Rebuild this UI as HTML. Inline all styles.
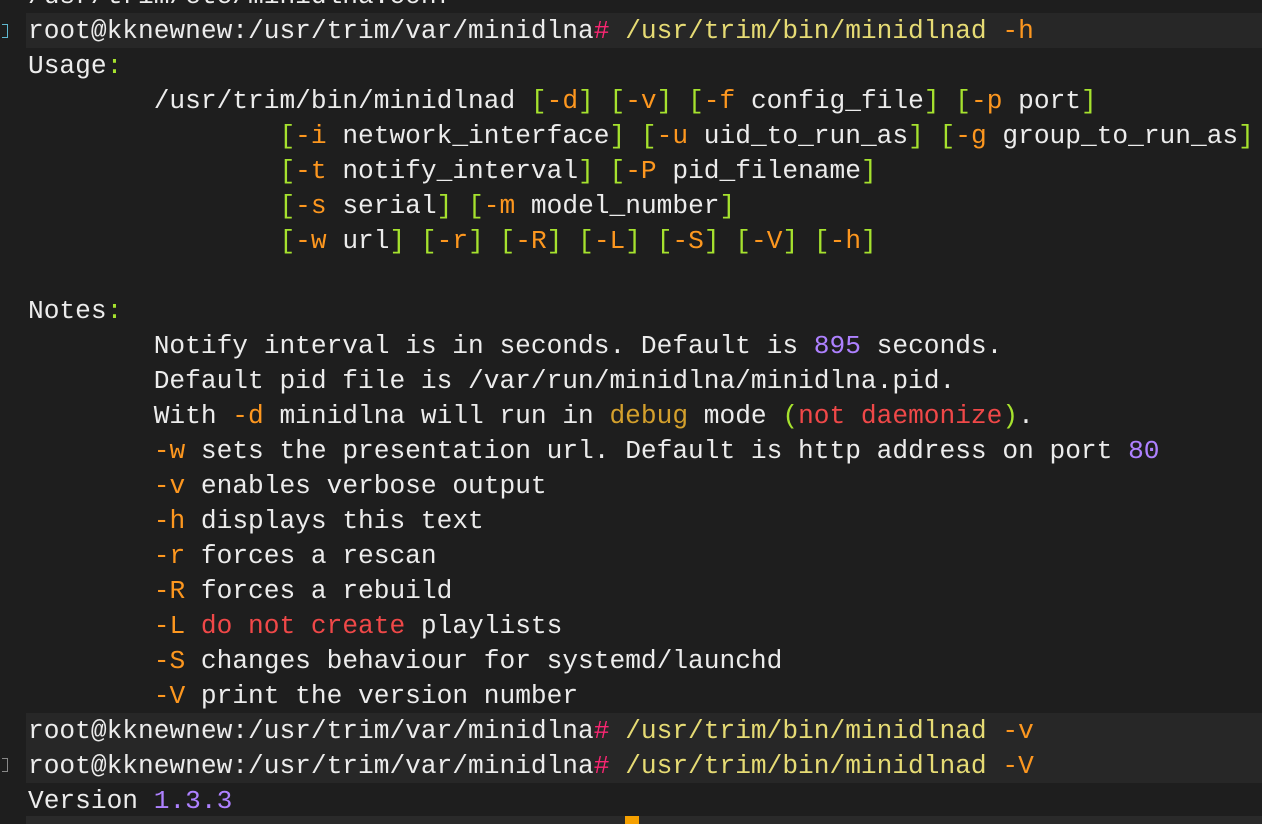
<!DOCTYPE html>
<html><head><meta charset="utf-8"><style>
html,body{margin:0;padding:0;background:#1e1e1e;width:1262px;height:824px;overflow:hidden;position:relative}
pre{position:absolute;left:28px;top:-21px;margin:0;font-family:"Liberation Mono",monospace;font-size:26.2px;line-height:35px;color:#ececec;white-space:pre}
.hl{position:absolute;left:26px;width:1236px;height:35px;background:#272727}
.p{color:#f92672}.y{color:#e6db74}.g{color:#a6e22e}.o{color:#fd971f}.n{color:#ae81ff}.r{color:#f04848}.d{color:#d4a02c}
.bar{position:absolute;left:26px;top:816px;width:1236px;height:8px;background:#2a2a2a}
.cur{position:absolute;left:625px;top:816px;width:14px;height:8px;background:#f5a000}
.gm{position:absolute;left:2px;width:5px;height:12px;border:1px solid #5fb8d0;border-left:none}
</style></head><body>
<div class="hl" style="top:13px"></div>
<div class="hl" style="top:713px"></div>
<div class="hl" style="top:748px"></div>
<div class="bar"></div><div class="cur"></div>
<div class="gm" style="top:24px"></div>
<div class="gm" style="top:758px;border-color:#888"></div>
<pre>/usr/trim/etc/minidlna.conf
root@kknewnew:/usr/trim/var/minidlna<span class="p">#</span> <span class="y">/usr/trim/bin/minidlnad</span> <span class="o">-h</span>
Usage<span class="g">:</span>
        /usr/trim/bin/minidlnad <span class="g">[</span><span class="o">-d</span><span class="g">]</span> <span class="g">[</span><span class="o">-v</span><span class="g">]</span> <span class="g">[</span><span class="o">-f</span> config_file<span class="g">]</span> <span class="g">[</span><span class="o">-p</span> port<span class="g">]</span>
                <span class="g">[</span><span class="o">-i</span> network_interface<span class="g">]</span> <span class="g">[</span><span class="o">-u</span> uid_to_run_as<span class="g">]</span> <span class="g">[</span><span class="o">-g</span> group_to_run_as<span class="g">]</span>
                <span class="g">[</span><span class="o">-t</span> notify_interval<span class="g">]</span> <span class="g">[</span><span class="o">-P</span> pid_filename<span class="g">]</span>
                <span class="g">[</span><span class="o">-s</span> serial<span class="g">]</span> <span class="g">[</span><span class="o">-m</span> model_number<span class="g">]</span>
                <span class="g">[</span><span class="o">-w</span> url<span class="g">]</span> <span class="g">[</span><span class="o">-r</span><span class="g">]</span> <span class="g">[</span><span class="o">-R</span><span class="g">]</span> <span class="g">[</span><span class="o">-L</span><span class="g">]</span> <span class="g">[</span><span class="o">-S</span><span class="g">]</span> <span class="g">[</span><span class="o">-V</span><span class="g">]</span> <span class="g">[</span><span class="o">-h</span><span class="g">]</span>

Notes<span class="g">:</span>
        Notify interval is in seconds. Default is <span class="n">895</span> seconds.
        Default pid file is /var/run/minidlna/minidlna.pid.
        With <span class="o">-d</span> minidlna will run in <span class="d">debug</span> mode <span class="g">(</span><span class="r">not daemonize</span><span class="g">)</span>.
        <span class="o">-w</span> sets the presentation url. Default is http address on port <span class="n">80</span>
        <span class="o">-v</span> enables verbose output
        <span class="o">-h</span> displays this text
        <span class="o">-r</span> forces a rescan
        <span class="o">-R</span> forces a rebuild
        <span class="o">-L</span> <span class="r">do not create</span> playlists
        <span class="o">-S</span> changes behaviour for systemd/launchd
        <span class="o">-V</span> print the version number
root@kknewnew:/usr/trim/var/minidlna<span class="p">#</span> <span class="y">/usr/trim/bin/minidlnad</span> <span class="o">-v</span>
root@kknewnew:/usr/trim/var/minidlna<span class="p">#</span> <span class="y">/usr/trim/bin/minidlnad</span> <span class="o">-V</span>
Version <span class="n">1.3.3</span></pre>
</body></html>
